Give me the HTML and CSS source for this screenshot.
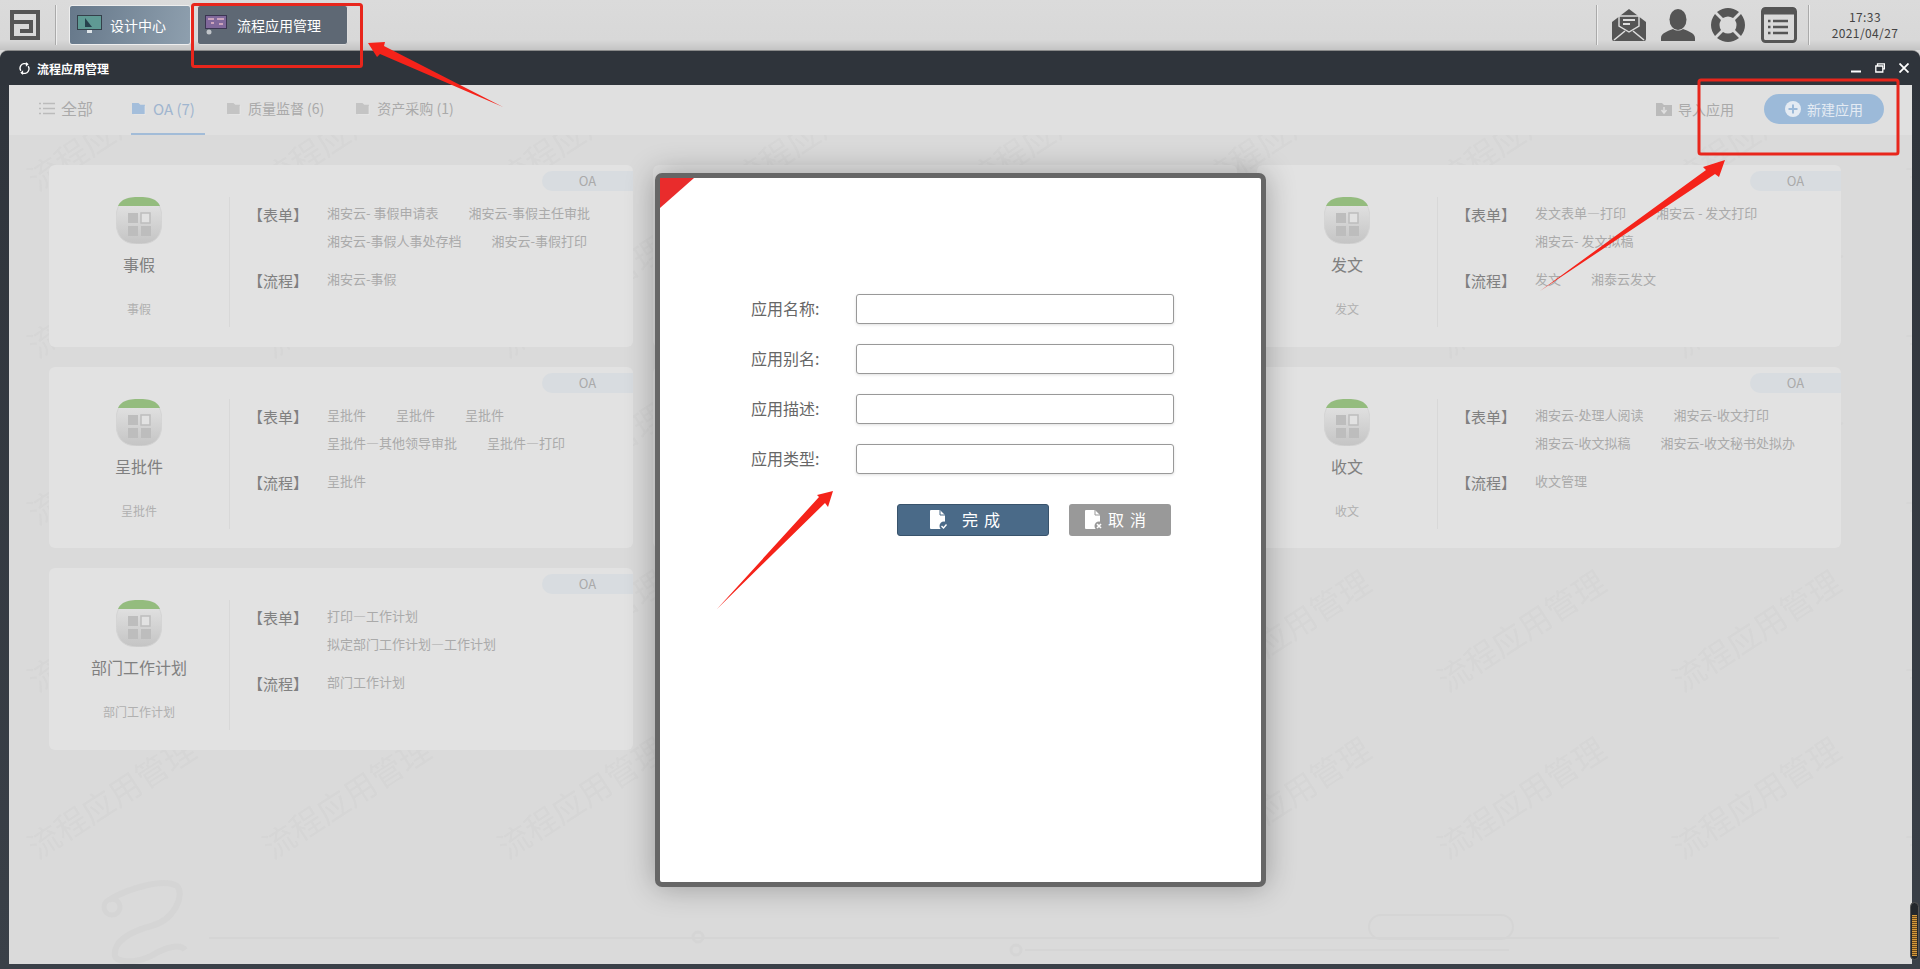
FILE: index.html
```html
<!DOCTYPE html>
<html lang="zh-CN">
<head>
  <meta charset="UTF-8" />
  <title>流程应用管理</title>
  <link rel="stylesheet" href="styles.css">
</head>
<body>
  <!-- shared icons -->
  <svg class="defs" width="0" height="0">
    <defs>
      <linearGradient id="app-grad" x1="0" y1="0" x2="0" y2="1">
        <stop offset="0" stop-color="#e6e6e6" />
        <stop offset="1" stop-color="#c4c4c4" />
      </linearGradient>
    </defs>
    <symbol id="app" viewBox="0 0 46 47">
      <path d="M23 0C38 0 46 5 46 23S38 47 23 47 0 41 0 23 8 0 23 0Z" fill="url(#app-grad)" stroke="#d4d4d4" />
      <path d="M23 0C34 0 41 2 44 9H2C5 2 12 0 23 0Z" fill="#94bc7e" />
      <rect x="12" y="16" width="10" height="10" fill="#bdbdbd" />
      <rect x="25" y="16" width="9" height="10" fill="#e2e2e2" stroke="#bdbdbd" stroke-width="1.5" />
      <rect x="12" y="29" width="10" height="10" fill="#bdbdbd" />
      <rect x="25" y="29" width="10" height="10" fill="#bdbdbd" />
    </symbol>
    <symbol id="folder" viewBox="0 0 16 14">
      <path d="M1 1h7l2 2h5v10H1Z" fill="currentColor" />
      <path d="M15 4v10H3" fill="none" stroke="#eee" stroke-width=".6" />
    </symbol>
  </svg>

  <header class="topbar">
    <svg class="logo" viewBox="0 0 30 30"><path d="M2 10V2H28V28H2V12H21V21H10" fill="none" stroke="#555" stroke-width="4" /></svg>
    <span class="sep"></span>
    <nav class="task-tabs">
      <a class="task-tab">
        <svg viewBox="0 0 25 20" width="25" height="20"><rect x="0" y="0" width="25" height="15" fill="#34404a" /><rect x="1" y="1" width="23" height="13" fill="#5f9a94" /><path d="M8 3l7 9H8Z" fill="#27414d" /><rect x="10" y="15" width="5" height="3" fill="#dfe5e9" /></svg>
        设计中心
      </a>
      <a class="task-tab active">
        <svg viewBox="0 0 22 20" width="22" height="20"><rect x="0" y="0" width="22" height="14" fill="#3b3552" /><rect x="1" y="1" width="20" height="12" fill="#80689b" /><path d="M3 4h6M12 4h7M6 8h3M14 9h4" stroke="#e3b6c8" stroke-width="1.4" /><circle cx="4" cy="17" r="2.5" fill="#c0c4c9" /></svg>
        流程应用管理
      </a>
    </nav>
    <div class="tray">
      <span class="sep"></span>
      <svg class="tray-icon" viewBox="0 0 34 34"><path d="M0 14 17 1 34 14V31a2 2 0 0 1-2 2H2a2 2 0 0 1-2-2Z" fill="#555" /><path d="M7 8h20v10l-10 6-10-6Z" fill="#555" stroke="#ddd" stroke-width="1.4" /><path d="M11 12h12M11 16h7" stroke="#ddd" stroke-width="2" /><path d="M2 32l11-9M32 32l-11-9" stroke="#ddd" stroke-width="1.6" /></svg>
      <svg class="tray-icon" viewBox="0 0 34 34"><ellipse cx="17" cy="11.5" rx="8.5" ry="10.500" fill="#555" /><path d="M0 33V30C0 25 7 23 12 21c3 2 7 2 10 0 5 2 12 4 12 9v3Z" fill="#555" /></svg>
      <svg class="tray-icon ring" viewBox="0 0 36 36">
        <path id="ring-seg" d="M7 5Q18-3 29 5L23 11Q18 8 13 11Z" fill="#555" />
        <use href="#ring-seg" transform="rotate(90 18 18)" />
        <use href="#ring-seg" transform="rotate(180 18 18)" />
        <use href="#ring-seg" transform="rotate(270 18 18)" />
      </svg>
      <svg class="tray-icon list" viewBox="0 0 36 36"><rect x="1.5" y="1.5" width="33" height="33" rx="3" fill="none" stroke="#555" stroke-width="3" /><rect x="1.5" y="1.5" width="33" height="6" fill="#555" /><path d="M12 14h15M12 20h15M12 26h15" stroke="#555" stroke-width="2.5" /><path d="M7 14h2.5M7 20h2.5M7 26h2.5" stroke="#555" stroke-width="2.5" /></svg>
      <span class="sep"></span>
      <div class="clock"><div>17:33</div><div>2021/04/27</div></div>
    </div>
  </header>

  <div class="window">
    <div class="titlebar">
      <svg class="title-icon" viewBox="0 0 14 14" width="13" height="13"><path d="M3 9.500A5 5 0 0 1 3 4 5 5 0 0 1 10 2.500M11 4.500A5 5 0 0 1 11 10 5 5 0 0 1 4 11.500" fill="none" stroke="#fff" stroke-width="1.400" /><path d="M8.500 0v5l3-2.500ZM5.500 14V9l-3 2.500Z" fill="#fff" /></svg>
      <span class="title-text">流程应用管理</span>
      <div class="win-btns">
        <svg viewBox="0 0 10 10" width="10" height="10"><path d="M0 8.500h10" stroke="#fff" stroke-width="2" /></svg>
        <svg viewBox="0 0 10 10" width="10" height="10"><path d="M2.500 2.500V.8h7v5H8M.8 3h7v6h-7Z" fill="none" stroke="#fff" stroke-width="1.300" /></svg>
        <svg viewBox="0 0 10 10" width="10" height="10"><path d="M.5.5l9 9M9.500.5l-9 9" stroke="#fff" stroke-width="1.800" /></svg>
      </div>
    </div>

    <div class="pane">
      <svg class="watermark" width="100%" height="800">
        <defs>
          <pattern id="wm" width="235" height="167" patternUnits="userSpaceOnUse" patternTransform="translate(-8 -28)">
            <text x="117" y="83" text-anchor="middle" transform="rotate(-33 117 83)" font-size="32">流程应用管理</text>
          </pattern>
        </defs>
        <rect width="100%" height="100%" fill="url(#wm)" />
      </svg>
      <svg class="deco" viewBox="0 0 1903 879" width="1903" height="879">
        <g fill="none" stroke="#d5d5d5">
          <path d="M100 815c20-12 55-22 68-14 8 8-2 34-26 40-22 6-38 16-36 30 2 6 20 8 36 0 16-10 30-12 34-6" stroke-width="6" />
          <circle cx="103" cy="822" r="8" stroke-width="5" />
          <path d="M200 853H1770M1016 865H1500M1372 830h120a12 12 0 0 1 0 24h-120a12 12 0 0 1 0-24Z" stroke-width="2" />
          <circle cx="689" cy="852" r="5" stroke-width="3" />
          <circle cx="1007" cy="865" r="5" stroke-width="3" />
        </g>
      </svg>

      <div class="tabbar">
        <a class="cat all">
          <svg viewBox="0 0 16 13" width="16" height="13"><path d="M4 1.500h12M4 6.500h12M4 11.500h12M0 1.500h2M0 6.500h2M0 11.500h2" stroke="#bbb" stroke-width="1.500" /></svg>
          全部
        </a>
        <a class="cat on"><svg width="15" height="13"><use href="#folder" /></svg>OA (7)</a>
        <a class="cat"><svg width="15" height="13"><use href="#folder" /></svg>质量监督 (6)</a>
        <a class="cat"><svg width="15" height="13"><use href="#folder" /></svg>资产采购 (1)</a>
        <div class="actions">
          <a class="import">
            <svg viewBox="0 0 16 14" width="16" height="14"><path d="M0 1h6l2 2h8v11H0Z" fill="#bbb" /><path d="M8 5v5M5.500 8 8 11l2.500-3" fill="none" stroke="#e0e0e0" stroke-width="1.500" /></svg>
            导入应用
          </a>
          <a class="new-app">
            <svg viewBox="0 0 16 16" width="16" height="16"><circle cx="8" cy="8" r="8" fill="#e4ebf3" /><path d="M8 3.500v9M3.500 8h9" stroke="#9cbad9" stroke-width="2" /></svg>
            新建应用
          </a>
        </div>
      </div>

      <div class="cards">
        <div class="card">
          <span class="tag">OA</span>
          <div class="card-left">
            <svg class="app-icon"><use href="#app" /></svg>
            <div class="app-name">事假</div>
            <div class="app-sub">事假</div>
          </div>
          <div class="card-right">
            <div class="row"><span class="row-label">【表单】</span><div class="links"><a>湘安云- 事假申请表</a><a>湘安云-事假主任审批</a><a>湘安云-事假人事处存档</a><a>湘安云-事假打印</a></div></div>
            <div class="row"><span class="row-label">【流程】</span><div class="links"><a>湘安云-事假</a></div></div>
          </div>
        </div>
        <div class="card"></div>
        <div class="card">
          <span class="tag">OA</span>
          <div class="card-left">
            <svg class="app-icon"><use href="#app" /></svg>
            <div class="app-name">发文</div>
            <div class="app-sub">发文</div>
          </div>
          <div class="card-right">
            <div class="row"><span class="row-label">【表单】</span><div class="links"><a>发文表单—打印</a><a>湘安云 - 发文打印</a><a>湘安云- 发文拟稿</a></div></div>
            <div class="row"><span class="row-label">【流程】</span><div class="links"><a>发文</a><a>湘泰云发文</a></div></div>
          </div>
        </div>

        <div class="card">
          <span class="tag">OA</span>
          <div class="card-left">
            <svg class="app-icon"><use href="#app" /></svg>
            <div class="app-name">呈批件</div>
            <div class="app-sub">呈批件</div>
          </div>
          <div class="card-right">
            <div class="row"><span class="row-label">【表单】</span><div class="links"><a>呈批件</a><a>呈批件</a><a>呈批件</a><a>呈批件—其他领导审批</a><a>呈批件—打印</a></div></div>
            <div class="row"><span class="row-label">【流程】</span><div class="links"><a>呈批件</a></div></div>
          </div>
        </div>
        <div class="card"></div>
        <div class="card">
          <span class="tag">OA</span>
          <div class="card-left">
            <svg class="app-icon"><use href="#app" /></svg>
            <div class="app-name">收文</div>
            <div class="app-sub">收文</div>
          </div>
          <div class="card-right">
            <div class="row"><span class="row-label">【表单】</span><div class="links"><a>湘安云-处理人阅读</a><a>湘安云-收文打印</a><a>湘安云-收文拟稿</a><a>湘安云-收文秘书处拟办</a></div></div>
            <div class="row"><span class="row-label">【流程】</span><div class="links"><a>收文管理</a></div></div>
          </div>
        </div>

        <div class="card">
          <span class="tag">OA</span>
          <div class="card-left">
            <svg class="app-icon"><use href="#app" /></svg>
            <div class="app-name">部门工作计划</div>
            <div class="app-sub">部门工作计划</div>
          </div>
          <div class="card-right">
            <div class="row"><span class="row-label">【表单】</span><div class="links"><a>打印—工作计划</a><a class="full">拟定部门工作计划—工作计划</a></div></div>
            <div class="row"><span class="row-label">【流程】</span><div class="links"><a>部门工作计划</a></div></div>
          </div>
        </div>
      </div>
    </div>
  </div>

  <!-- modal -->
  <div class="dialog">
    <span class="corner"></span>
    <form class="form">
      <label class="field"><span>应用名称:</span><input type="text" /></label>
      <label class="field"><span>应用别名:</span><input type="text" /></label>
      <label class="field"><span>应用描述:</span><input type="text" /></label>
      <label class="field"><span>应用类型:</span><input type="text" /></label>
      <div class="form-btns">
        <button type="button" class="btn ok">
          <svg viewBox="0 0 18 20" width="18" height="20"><path d="M1 0h9l5 5v13a2 2 0 0 1-2 1H1a1 1 0 0 1-1-1V1a1 1 0 0 1 1-1Z" fill="#fff" /><path d="M10 0v5h5" fill="none" stroke="#4a6a88" /><circle cx="14" cy="16" r="4.500" fill="#4a6a88" /><path d="M11.500 16l2 2 3-3.500" fill="none" stroke="#fff" stroke-width="1.400" /></svg>
          <span class="btn-text">完成</span>
        </button>
        <button type="button" class="btn cancel">
          <svg viewBox="0 0 18 20" width="18" height="20"><path d="M1 0h9l5 5v13a2 2 0 0 1-2 1H1a1 1 0 0 1-1-1V1a1 1 0 0 1 1-1Z" fill="#fff" /><path d="M10 0v5h5" fill="none" stroke="#999" /><circle cx="14" cy="16" r="4.500" fill="#999" /><path d="M12 14l4 4M16 14l-4 4" stroke="#fff" stroke-width="1.600" /></svg>
          <span class="btn-text">取消</span>
        </button>
      </div>
    </form>
  </div>

  <div class="scroll-thumb"><span></span></div>

  <!-- red annotations drawn on the screenshot -->
  <svg class="marks" viewBox="0 0 1920 969" width="1920" height="969">
    <rect x="192.500" y="4.500" width="169" height="62" rx="2" fill="none" stroke="#e8261c" stroke-width="3" />
    <rect x="1699" y="80" width="199" height="74" rx="2" fill="none" stroke="#e8261c" stroke-width="3" />
    <polygon points="503,107 384,46 385,42 368,43 377,57 380,54" fill="#f5231a" />
    <polygon points="717,609 819,497 817,495 833,491 828,507 825,503" fill="#f5231a" />
    <polygon points="1540,291 1706,170 1703,167 1725,160 1719,177 1715,174" fill="#f5231a" />
  </svg>
</body>
</html>
```

FILE: styles.css
```css
html, body {
  margin: 0;
  padding: 0;
  height: 969px;
  overflow: hidden;
  font-family: "Noto Sans CJK SC", "Noto Sans", sans-serif;
  color: #666;
  background: #d9d9d9;
}

body {
  display: flex;
  flex-direction: column;
}

.defs {
  position: absolute;
}

/* top bar */
.topbar {
  height: 50px;
  flex: none;
  display: flex;
  align-items: center;
  background: linear-gradient(#dbdbdb 0, #d8d8d8 80%, #c4c4c4 100%);
}

.logo {
  width: 30px;
  height: 30px;
  margin: 0 15px 0 10px;
}

.sep {
  width: 1px;
  height: 40px;
  background: #aaa;
  border-right: 1px solid #eee;
}

.task-tabs {
  display: flex;
  gap: 6px;
  margin-left: 12px;
}

.task-tab {
  height: 40px;
  width: 122px;
  display: flex;
  align-items: center;
  gap: 8px;
  padding-left: 7px;
  box-sizing: border-box;
  border: 1px solid #eee;
  border-radius: 3px;
  font-size: 14px;
  color: #fff;
  background: linear-gradient(100deg, #66788a, #8e9fae);
}

.task-tab.active {
  width: 151px;
  gap: 10px;
  border-color: #ddd;
  background: #5e6874;
}

.tray {
  margin-left: auto;
  display: flex;
  align-items: center;
  height: 100%;
}

.tray-icon {
  width: 34px;
  height: 34px;
  margin-left: 15px;
}

.tray-icon.ring,
.tray-icon.list {
  width: 36px;
  height: 36px;
}

.tray .sep:first-child {
  margin-right: -1px;
}

.tray .clock {
  width: 110px;
  text-align: center;
  font-size: 12px;
  line-height: 16px;
  letter-spacing: .4px;
  color: #444;
}

.tray-icon.list {
  margin-right: 11px;
}

/* window */
.window {
  flex: 1;
  min-height: 0;
  display: flex;
  flex-direction: column;
  background: linear-gradient(#2f343b, #3a4048);
  border-top: 1px solid #8a8a8a;
  border-radius: 8px 8px 0 0;
}

.titlebar {
  height: 34px;
  flex: none;
  display: flex;
  align-items: center;
  padding-left: 18px;
  background: #2f343b;
  border-radius: 8px 8px 0 0;
}

.title-text {
  margin-left: 6px;
  font-size: 12px;
  font-weight: bold;
  color: #fff;
}

.win-btns {
  margin-left: auto;
  margin-right: 11px;
  display: flex;
  gap: 14px;
}

.pane {
  flex: 1;
  min-height: 0;
  position: relative;
  margin: 0 8px 5px 9px;
  background: #dadada;
  overflow: hidden;
}

.watermark,
.deco {
  position: absolute;
  top: 0;
  left: 0;
}

.watermark text {
  fill: #d6d6d6;
  font-family: "Noto Sans CJK SC", sans-serif;
}

/* category tabs */
.tabbar {
  position: relative;
  height: 50px;
  display: flex;
  align-items: center;
  gap: 21px;
  padding-left: 30px;
  box-sizing: border-box;
  background: #e0e0e0;
  font-size: 14px;
  color: #aaa;
}

.cat {
  height: 100%;
  display: flex;
  align-items: center;
  gap: 7px;
  padding: 0 10px 4px 0;
  box-sizing: border-box;
  color: #aaa;
}

.cat.all {
  margin-right: 7px;
  font-size: 16px;
  gap: 6px;
}

.cat.on {
  font-size: 15px;
  color: #9fb5cf;
  border-bottom: 2px solid #a2bcd8;
  padding-bottom: 2px;
}

.cat.on svg {
  color: #a4bedb;
}

.cat svg {
  color: #c4c4c4;
}

.actions {
  margin: 0 28px 2px auto;
  display: flex;
  align-items: center;
  gap: 30px;
}

.import {
  display: flex;
  align-items: center;
  gap: 6px;
}

.new-app {
  width: 120px;
  height: 30px;
  display: flex;
  align-items: center;
  justify-content: center;
  gap: 6px;
  border-radius: 15px;
  background: #9cbad9;
  color: #e4ebf3;
}

/* app cards */
.cards {
  position: relative;
  display: grid;
  grid-template-columns: repeat(3, 584px);
  grid-auto-rows: 181.5px;
  gap: 20px;
  padding: 30px 0 0 40px;
}

.card {
  position: relative;
  display: flex;
  background: #e2e2e2;
  border-radius: 6px;
}

.tag {
  position: absolute;
  top: 6px;
  right: 0;
  width: 91px;
  height: 20px;
  line-height: 20px;
  text-align: center;
  font-size: 13px;
  color: #aaa;
  background: #d8dce0;
  border-radius: 10px 0 0 10px;
}

.card-left {
  flex: none;
  width: 180px;
  height: 130px;
  margin-top: 32px;
  display: flex;
  flex-direction: column;
  align-items: center;
  border-right: 1px solid #d8d8d8;
}

.app-icon {
  width: 46px;
  height: 47px;
  flex: none;
}

.app-name {
  margin-top: 10px;
  font-size: 16px;
  line-height: 20px;
  color: #808080;
}

.app-sub {
  margin-top: 25px;
  font-size: 12px;
  line-height: 20px;
  color: #b0b0b0;
}

.card-right {
  flex: 1;
  min-width: 0;
  padding: 43px 12px 0 18px;
  display: flex;
  flex-direction: column;
  gap: 26px;
}

.row {
  display: flex;
}

.row-label {
  flex: none;
  width: 79px;
  font-size: 15px;
  line-height: 14px;
  color: #808080;
  white-space: nowrap;
}

.links {
  flex: 1;
  display: flex;
  flex-wrap: wrap;
  gap: 14px 30px;
  margin-top: -2px;
  font-size: 13px;
  line-height: 14px;
  color: #aaa;
}

.links .full {
  flex-basis: 100%;
}

/* modal dialog */
.dialog {
  position: absolute;
  left: 655px;
  top: 173px;
  width: 611px;
  height: 714px;
  box-sizing: border-box;
  border: 5px solid #666;
  border-radius: 7px;
  background: #fff;
  box-shadow: 0 0 30px rgba(0,0,0,0.3);
}

.corner {
  position: absolute;
  top: 0;
  left: 0;
  width: 34px;
  height: 30px;
  background: #e92c2c;
  clip-path: polygon(0 0, 100% 0, 0 100%);
}

.form {
  padding: 116px 0 0 91px;
  display: flex;
  flex-direction: column;
  gap: 20px;
}

.field {
  display: flex;
  align-items: center;
  font-size: 16px;
  color: #666;
}

.field span {
  width: 105px;
  padding-bottom: 3px;
  white-space: nowrap;
}

.field input {
  width: 318px;
  height: 30px;
  box-sizing: border-box;
  border: 1px solid #999;
  border-radius: 3px;
  background: #fff;
  box-shadow: 0 1px 3px rgba(0,0,0,0.12);
  outline: none;
}

.form-btns {
  display: flex;
  gap: 20px;
  margin: 10px 0 0 146px;
}

.btn {
  height: 32px;
  display: flex;
  align-items: center;
  padding: 0;
  box-sizing: border-box;
  border: none;
  border-radius: 3px;
  font-family: inherit;
  font-size: 16px;
  color: #fff;
}

.btn-text {
  letter-spacing: 6px;
  padding-bottom: 2px;
}

.btn.ok {
  width: 152px;
  padding-left: 32px;
  gap: 14px;
  background: #4a6a88;
  border: 1px solid #38536c;
}

.btn.cancel {
  width: 102px;
  padding-left: 16px;
  gap: 5px;
  background: #999;
}

/* little scroller bottom right */
.scroll-thumb {
  position: absolute;
  left: 1910px;
  top: 902px;
  width: 9px;
  height: 58px;
  box-sizing: border-box;
  padding: 12px 1px 3px;
  background: #23272c;
  border: 1px solid #555;
  border-radius: 5px;
}

.scroll-thumb span {
  display: block;
  height: 100%;
  background: repeating-linear-gradient(#d69a3c 0, #d69a3c 1px, #6b4a1c 1px, #6b4a1c 2px);
}

.marks {
  position: absolute;
  top: 0;
  left: 0;
  pointer-events: none;
}
```
